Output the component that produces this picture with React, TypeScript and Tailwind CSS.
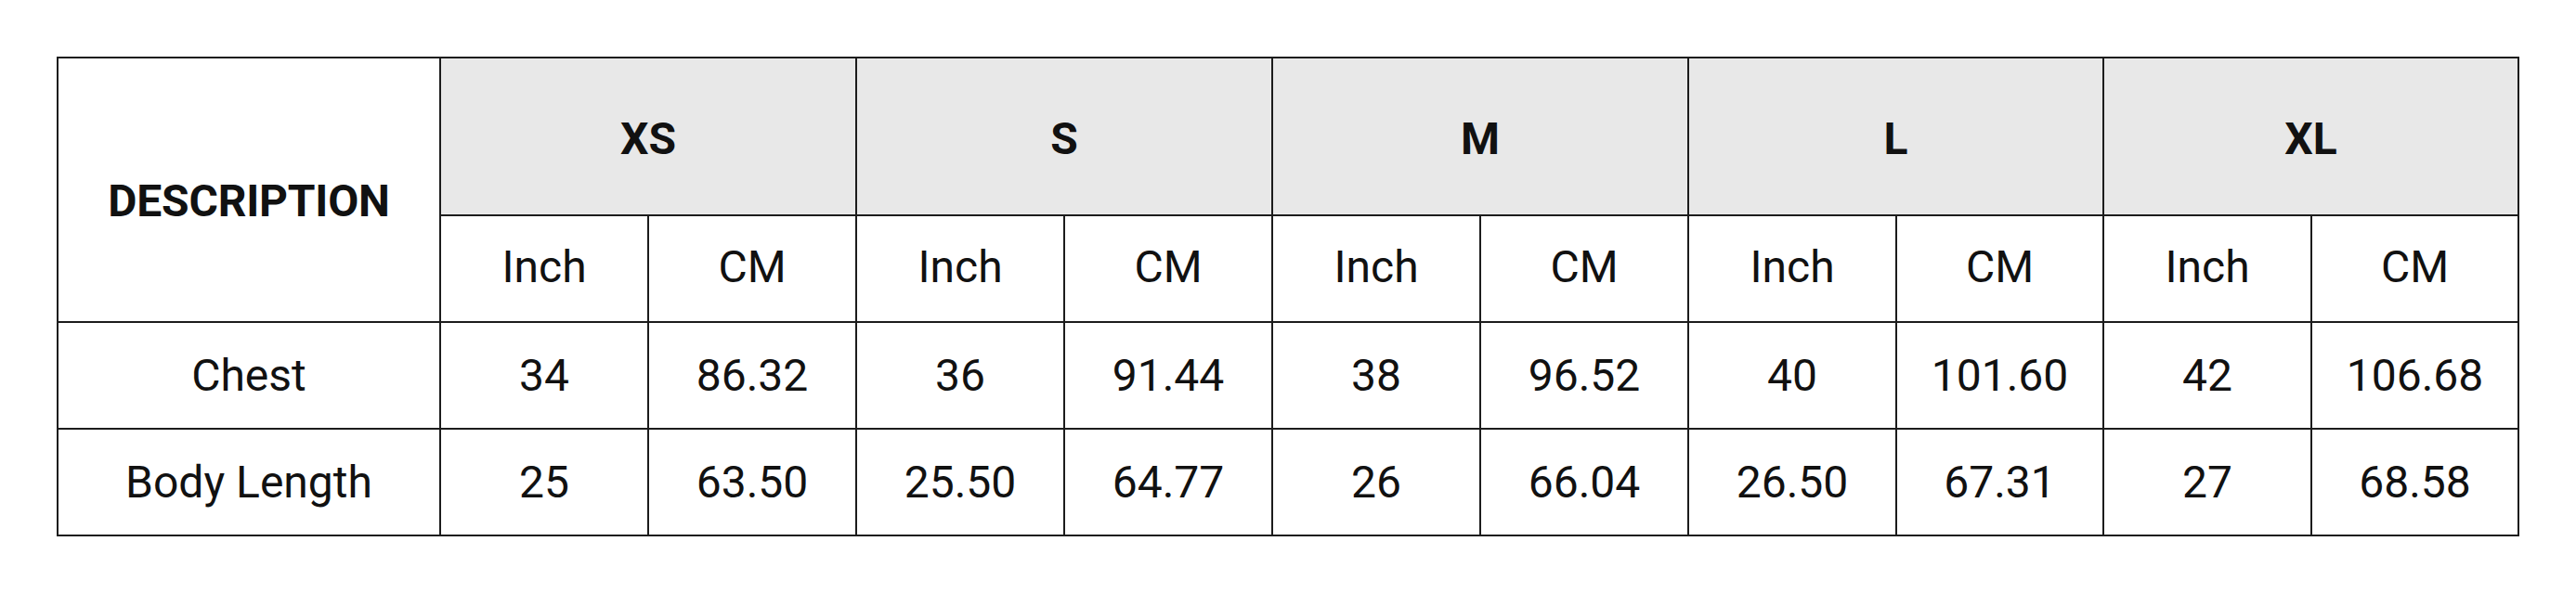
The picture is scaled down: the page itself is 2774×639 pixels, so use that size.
import React from "react";

const sizes = [
  { name: "XS", w: ["w-[224px]", "w-[224px]"] },
  { name: "S", w: ["w-[224px]", "w-[224px]"] },
  { name: "M", w: ["w-[224px]", "w-[224px]"] },
  { name: "L", w: ["w-[224px]", "w-[223px]"] },
  { name: "XL", w: ["w-[224px]", "w-[223px]"] },
];

const rows = [
  { label: "Chest", values: ["34", "86.32", "36", "91.44", "38", "96.52", "40", "101.60", "42", "106.68"] },
  { label: "Body Length", values: ["25", "63.50", "25.50", "64.77", "26", "66.04", "26.50", "67.31", "27", "68.58"] },
];

const cell = "border-r-2 border-b-2 border-[#1c1c1c] text-center align-middle p-0";

export default function App() {
  return (
    <div className="w-[2774px] h-[639px] bg-white pt-[61px] pl-[61px] font-['Roboto',sans-serif] text-[#111]">
      <table className="border-separate border-spacing-0 table-fixed border-l-2 border-t-2 border-[#1c1c1c]">
        <colgroup>
          <col className="w-[412px]" />
          {sizes.map((s) => (
            <React.Fragment key={s.name}>
              <col className={s.w[0]} />
              <col className={s.w[1]} />
            </React.Fragment>
          ))}
        </colgroup>
        <thead>
          <tr>
            <th rowSpan={2} className={`${cell} pt-[24px] text-[48px] font-bold tracking-[-0.2px]`}>
              DESCRIPTION
            </th>
            {sizes.map((s) => (
              <th key={s.name} colSpan={2} className={`${cell} h-[170px] bg-[#e8e8e8] text-[48px] font-bold pt-[6px]`}>
                {s.name}
              </th>
            ))}
          </tr>
          <tr>
            {sizes.map((s) => (
              <React.Fragment key={s.name}>
                <th className={`${cell} h-[115px] text-[48px] font-normal pb-[4px]`}>Inch</th>
                <th className={`${cell} h-[115px] text-[48px] font-normal pb-[4px]`}>CM</th>
              </React.Fragment>
            ))}
          </tr>
        </thead>
        <tbody>
          {rows.map((r) => (
            <tr key={r.label}>
              <td className={`${cell} h-[115px] text-[48px]`}>{r.label}</td>
              {r.values.map((v, i) => (
                <td key={i} className={`${cell} h-[115px] text-[48px]`}>
                  {v}
                </td>
              ))}
            </tr>
          ))}
        </tbody>
      </table>
    </div>
  );
}
